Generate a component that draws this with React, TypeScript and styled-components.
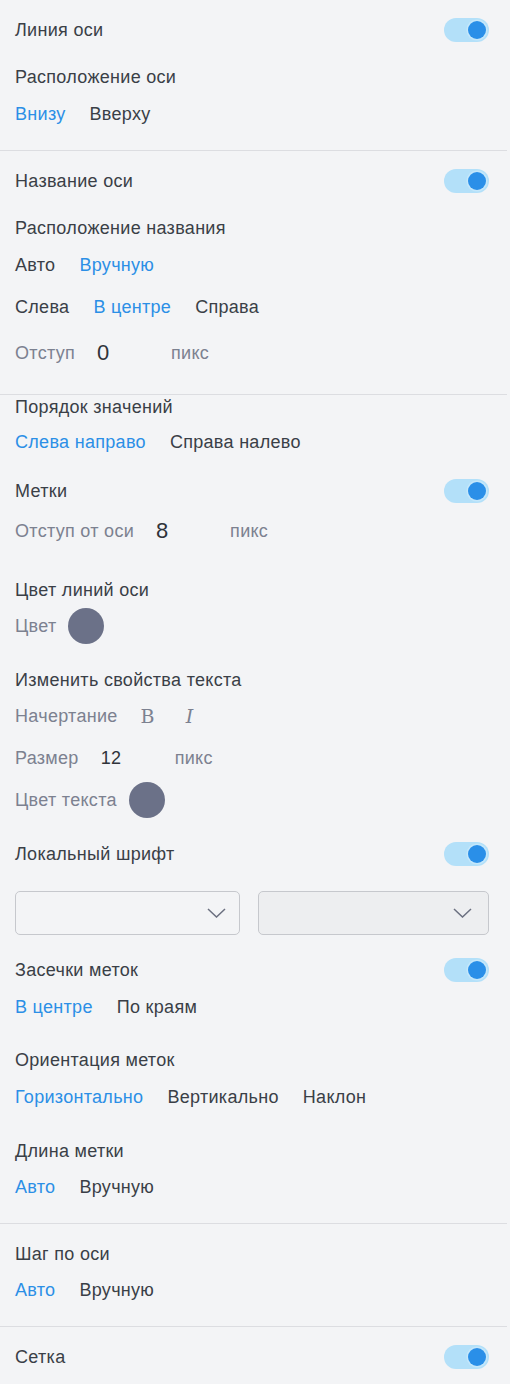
import React from "react";
import styled, { createGlobalStyle } from "styled-components";

const GlobalStyle = createGlobalStyle`
  body {
    margin: 0;
    background: #f3f4f6;
    font-family: "Liberation Sans", Arial, sans-serif;
    letter-spacing: 0.3px;
    color: #3a3f47;
  }
`;

const Panel = styled.div`
  width: 510px;
  padding-top: 18px;
  padding-bottom: 15px;
  background: #f3f4f6;
`;

const Section = styled.div`
  padding: 0 21px 0 15px;
`;

const Divider = styled.div<{ $gap?: number }>`
  width: 507px;
  height: 1px;
  background: #dcdde1;
  margin-top: ${(p) => p.$gap ?? 24}px;
`;

const Row = styled.div<{ $gap?: number; $h?: number }>`
  display: flex;
  align-items: center;
  justify-content: space-between;
  height: ${(p) => p.$h ?? 24}px;
  margin-top: ${(p) => p.$gap ?? 0}px;
`;

const Title = styled.span`
  font-size: 18px;
  line-height: 24px;
  color: #3a3f47;
`;

const Options = styled.div`
  display: flex;
  align-items: center;
  gap: 24px;
`;

const Option = styled.span<{ $active?: boolean }>`
  font-size: 18px;
  line-height: 24px;
  color: ${(p) => (p.$active ? "#2b8fe6" : "#3a3f47")};
  cursor: pointer;
`;

const Field = styled.div<{ $gap?: number }>`
  display: flex;
  align-items: center;
  gap: ${(p) => p.$gap ?? 22}px;
`;

const FieldLabel = styled.span`
  font-size: 18px;
  line-height: 24px;
  color: #7c8190;
`;

const Value = styled.span<{ $size?: number }>`
  width: 52px;
  font-size: ${(p) => p.$size ?? 18}px;
  line-height: 24px;
  color: #2f333a;
`;

const Unit = styled.span`
  font-size: 18px;
  line-height: 24px;
  color: #7c8190;
`;

const StyleBtn = styled.span<{ $italic?: boolean }>`
  width: 24px;
  text-align: center;
  font-family: "DejaVu Serif", "Liberation Serif", serif;
  font-size: 19px;
  font-style: ${(p) => (p.$italic ? "italic" : "normal")};
  color: #7c8190;
`;

const Swatch = styled.span<{ $color: string }>`
  width: 36px;
  height: 36px;
  border-radius: 50%;
  background: ${(p) => p.$color};
`;

const Track = styled.span`
  position: relative;
  width: 45px;
  height: 24px;
  border-radius: 12px;
  background: #b3e0f9;
`;

const Knob = styled.span`
  position: absolute;
  top: 3px;
  right: 3px;
  width: 18px;
  height: 18px;
  border-radius: 50%;
  background: #2a8fe8;
  box-shadow: 0 0 0 1.5px #c4e7fb;
`;

const Selects = styled.div`
  display: grid;
  grid-template-columns: 225px 231px;
  gap: 18px;
  margin-top: 25px;
`;

const SelectBox = styled.div<{ $disabled?: boolean }>`
  box-sizing: border-box;
  height: 44px;
  display: flex;
  align-items: center;
  justify-content: flex-end;
  padding-right: ${(p) => (p.$disabled ? 16 : 13)}px;
  border: 1px solid #c6c8cd;
  border-radius: 5px;
  background: ${(p) => (p.$disabled ? "#edeef0" : "#f3f4f6")};
`;

const Toggle = () => (
  <Track>
    <Knob />
  </Track>
);

const Chevron = () => (
  <svg width="19" height="10" viewBox="0 0 19 10" fill="none">
    <path d="M1 1l8.5 8 8.5-8" stroke="#6b7080" strokeWidth="1.5" />
  </svg>
);

const Choice = ({ items, active }: { items: string[]; active: number }) => (
  <Options>
    {items.map((t, i) => (
      <Option key={t} $active={i === active}>
        {t}
      </Option>
    ))}
  </Options>
);

export default function App() {
  return (
    <>
      <GlobalStyle />
      <Panel>
        <Section>
          <Row>
            <Title>Линия оси</Title>
            <Toggle />
          </Row>
          <Row $gap={23}>
            <Title>Расположение оси</Title>
          </Row>
          <Row $gap={13}>
            <Choice items={["Внизу", "Вверху"]} active={0} />
          </Row>
        </Section>
        <Divider />
        <Section>
          <Row $gap={18}>
            <Title>Название оси</Title>
            <Toggle />
          </Row>
          <Row $gap={23}>
            <Title>Расположение названия</Title>
          </Row>
          <Row $gap={13}>
            <Choice items={["Авто", "Вручную"]} active={1} />
          </Row>
          <Row $gap={18}>
            <Choice items={["Слева", "В центре", "Справа"]} active={1} />
          </Row>
          <Row $gap={22}>
            <Field>
              <FieldLabel>Отступ</FieldLabel>
              <Value $size={22}>0</Value>
              <Unit>пикс</Unit>
            </Field>
          </Row>
        </Section>
        <Divider $gap={29} />
        <Section>
          <Row>
            <Title>Порядок значений</Title>
          </Row>
          <Row $gap={11}>
            <Choice items={["Слева направо", "Справа налево"]} active={0} />
          </Row>
          <Row $gap={25}>
            <Title>Метки</Title>
            <Toggle />
          </Row>
          <Row $gap={16}>
            <Field>
              <FieldLabel>Отступ от оси</FieldLabel>
              <Value $size={22}>8</Value>
              <Unit>пикс</Unit>
            </Field>
          </Row>
          <Row $gap={35}>
            <Title>Цвет линий оси</Title>
          </Row>
          <Row $gap={6} $h={36}>
            <Field $gap={11}>
              <FieldLabel>Цвет</FieldLabel>
              <Swatch $color="#6b7188" />
            </Field>
          </Row>
          <Row $gap={24}>
            <Title>Изменить свойства текста</Title>
          </Row>
          <Row $gap={12}>
            <Field $gap={18}>
              <FieldLabel>Начертание</FieldLabel>
              <StyleBtn>B</StyleBtn>
              <StyleBtn $italic>I</StyleBtn>
            </Field>
          </Row>
          <Row $gap={18}>
            <Field>
              <FieldLabel>Размер</FieldLabel>
              <Value>12</Value>
              <Unit>пикс</Unit>
            </Field>
          </Row>
          <Row $gap={12} $h={36}>
            <Field $gap={12}>
              <FieldLabel>Цвет текста</FieldLabel>
              <Swatch $color="#6b7188" />
            </Field>
          </Row>
          <Row $gap={24}>
            <Title>Локальный шрифт</Title>
            <Toggle />
          </Row>
          <Selects>
            <SelectBox>
              <Chevron />
            </SelectBox>
            <SelectBox $disabled>
              <Chevron />
            </SelectBox>
          </Selects>
          <Row $gap={23}>
            <Title>Засечки меток</Title>
            <Toggle />
          </Row>
          <Row $gap={13}>
            <Choice items={["В центре", "По краям"]} active={0} />
          </Row>
          <Row $gap={29}>
            <Title>Ориентация меток</Title>
          </Row>
          <Row $gap={13}>
            <Choice items={["Горизонтально", "Вертикально", "Наклон"]} active={0} />
          </Row>
          <Row $gap={30}>
            <Title>Длина метки</Title>
          </Row>
          <Row $gap={12}>
            <Choice items={["Авто", "Вручную"]} active={0} />
          </Row>
        </Section>
        <Divider />
        <Section>
          <Row $gap={18}>
            <Title>Шаг по оси</Title>
          </Row>
          <Row $gap={12}>
            <Choice items={["Авто", "Вручную"]} active={0} />
          </Row>
        </Section>
        <Divider />
        <Section>
          <Row $gap={18}>
            <Title>Сетка</Title>
            <Toggle />
          </Row>
        </Section>
      </Panel>
    </>
  );
}
